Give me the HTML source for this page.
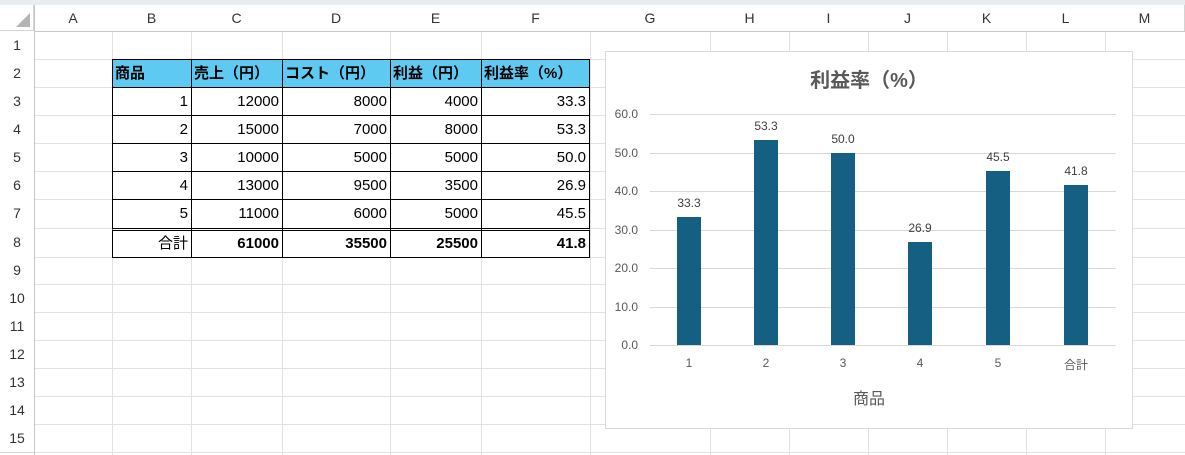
<!DOCTYPE html><html><head><meta charset="utf-8"><style>
*{margin:0;padding:0;box-sizing:border-box}
body{width:1185px;height:455px;overflow:hidden;background:#fff;position:relative;font-family:"Liberation Sans","Noto Sans CJK JP",sans-serif;}
.a{position:absolute}
.ch{position:absolute;top:5px;height:26px;font-size:14px;color:#333;text-align:center;line-height:26px;border-right:1px solid #d4d4d4;background:#fff}
.rh{position:absolute;left:0;width:34px;font-size:14px;color:#333;text-align:center;border-bottom:1px solid #d4d4d4;background:#fff}
.c{position:absolute;font-size:15px;color:#000;padding:0 3px;line-height:27px;border:1px solid #000;margin:-1px 0 0 -1px;white-space:nowrap;overflow:hidden}
.r{text-align:right}
.h{background:#5ecaf2;font-weight:bold}
.b{font-weight:bold}
.gl{position:absolute;left:650px;width:466px;height:1px;background:#d9d9d9}
.yl{position:absolute;left:606px;width:32px;text-align:right;font-size:12px;color:#595959}
.bar{position:absolute;width:24px;background:#156082}
.dl{position:absolute;width:40px;text-align:center;font-size:12px;color:#404040}
.xl{position:absolute;width:40px;text-align:center;font-size:12px;color:#595959;top:356px}
</style></head><body>
<div class="a" style="left:0;top:0;width:1185px;height:5px;background:#e6ecef"></div>
<svg class="a" style="left:0;top:0" width="1185" height="455">
<g stroke="#e1e1e1" stroke-width="1">
<line x1="112.5" y1="31" x2="112.5" y2="455"/><line x1="191.5" y1="31" x2="191.5" y2="455"/><line x1="282.5" y1="31" x2="282.5" y2="455"/><line x1="390.5" y1="31" x2="390.5" y2="455"/><line x1="481.5" y1="31" x2="481.5" y2="455"/><line x1="590.5" y1="31" x2="590.5" y2="455"/><line x1="710.5" y1="31" x2="710.5" y2="455"/><line x1="789.5" y1="31" x2="789.5" y2="455"/><line x1="868.5" y1="31" x2="868.5" y2="455"/><line x1="947.5" y1="31" x2="947.5" y2="455"/><line x1="1026.5" y1="31" x2="1026.5" y2="455"/><line x1="1105.5" y1="31" x2="1105.5" y2="455"/>
<line x1="34" y1="59.5" x2="1185" y2="59.5"/><line x1="34" y1="87.5" x2="1185" y2="87.5"/><line x1="34" y1="115.5" x2="1185" y2="115.5"/><line x1="34" y1="143.5" x2="1185" y2="143.5"/><line x1="34" y1="171.5" x2="1185" y2="171.5"/><line x1="34" y1="199.5" x2="1185" y2="199.5"/><line x1="34" y1="228.5" x2="1185" y2="228.5"/><line x1="34" y1="257.5" x2="1185" y2="257.5"/><line x1="34" y1="284.5" x2="1185" y2="284.5"/><line x1="34" y1="312.5" x2="1185" y2="312.5"/><line x1="34" y1="340.5" x2="1185" y2="340.5"/><line x1="34" y1="368.5" x2="1185" y2="368.5"/><line x1="34" y1="396.5" x2="1185" y2="396.5"/><line x1="34" y1="424.5" x2="1185" y2="424.5"/><line x1="34" y1="452.5" x2="1185" y2="452.5"/>
</g></svg>
<div class="a" style="left:0;top:5px;width:34px;height:26px;border-right:1px solid #d4d4d4;border-bottom:1px solid #d4d4d4"></div>
<svg class="a" style="left:16px;top:13px" width="14" height="14"><polygon points="14,0 14,14 0,14" fill="#b4b4b4"/></svg>
<div class="ch" style="left:34px;width:79px">A</div><div class="ch" style="left:112px;width:80px">B</div><div class="ch" style="left:191px;width:92px">C</div><div class="ch" style="left:282px;width:109px">D</div><div class="ch" style="left:390px;width:92px">E</div><div class="ch" style="left:481px;width:110px">F</div><div class="ch" style="left:590px;width:121px">G</div><div class="ch" style="left:710px;width:80px">H</div><div class="ch" style="left:789px;width:80px">I</div><div class="ch" style="left:868px;width:80px">J</div><div class="ch" style="left:947px;width:80px">K</div><div class="ch" style="left:1026px;width:80px">L</div><div class="ch" style="left:1105px;width:80px">M</div>
<div class="a" style="left:0;top:31px;width:1185px;height:1px;background:#c8c8c8"></div>
<div class="a" style="left:34px;top:5px;width:1px;height:450px;background:#c8c8c8"></div>
<div class="rh" style="top:31px;height:29px;line-height:28px">1</div><div class="rh" style="top:59px;height:29px;line-height:28px">2</div><div class="rh" style="top:87px;height:29px;line-height:28px">3</div><div class="rh" style="top:115px;height:29px;line-height:28px">4</div><div class="rh" style="top:143px;height:29px;line-height:28px">5</div><div class="rh" style="top:171px;height:29px;line-height:28px">6</div><div class="rh" style="top:199px;height:30px;line-height:28px">7</div><div class="rh" style="top:228px;height:30px;line-height:29px">8</div><div class="rh" style="top:257px;height:28px;line-height:27px">9</div><div class="rh" style="top:284px;height:29px;line-height:28px">10</div><div class="rh" style="top:312px;height:29px;line-height:28px">11</div><div class="rh" style="top:340px;height:29px;line-height:28px">12</div><div class="rh" style="top:368px;height:29px;line-height:28px">13</div><div class="rh" style="top:396px;height:29px;line-height:28px">14</div><div class="rh" style="top:424px;height:29px;line-height:28px">15</div>
<div id="t"></div>
<script>
var xs=[113,192,283,391,482,590],ys=[60,88,116,144,172,200,229,258];
var d=[["商品","売上（円）","コスト（円）","利益（円）","利益率（%）"],["1","12000","8000","4000","33.3"],["2","15000","7000","8000","53.3"],["3","10000","5000","5000","50.0"],["4","13000","9500","3500","26.9"],["5","11000","6000","5000","45.5"],["合計","61000","35500","25500","41.8"]];
var h="";for(var r=0;r<7;r++)for(var c=0;c<5;c++){var cls="c"+(r==0?" h":" r")+(r==6&&c>0?" b":"");var st="left:"+xs[c]+"px;top:"+ys[r]+"px;width:"+(xs[c+1]-xs[c]+1)+"px;height:"+(ys[r+1]-ys[r]+1)+"px;"+(r==6?"border-top:3px double #000;line-height:25px;":"")+(r==0?"padding:0 2px;":"");h+='<div class="'+cls+'" style="'+st+'">'+d[r][c]+'</div>';}
document.getElementById("t").outerHTML=h;
</script>
<div class="a" style="left:605px;top:51px;width:528px;height:378px;background:#fff;border:1px solid #d9d9d9"></div>
<div class="a" style="left:605px;top:64px;width:528px;text-align:center;font-size:20px;font-weight:bold;color:#595959">利益率（%）</div>
<div class="gl" style="top:114px"></div><div class="gl" style="top:153px"></div><div class="gl" style="top:191px"></div><div class="gl" style="top:230px"></div><div class="gl" style="top:268px"></div><div class="gl" style="top:307px"></div><div class="gl" style="top:345px"></div>
<div class="yl" style="top:107px">60.0</div><div class="yl" style="top:146px">50.0</div><div class="yl" style="top:184px">40.0</div><div class="yl" style="top:223px">30.0</div><div class="yl" style="top:261px">20.0</div><div class="yl" style="top:300px">10.0</div><div class="yl" style="top:338px">0.0</div>
<div class="bar" style="left:677px;top:217px;height:128px"></div><div class="dl" style="left:669px;top:196px">33.3</div>
<div class="bar" style="left:754px;top:140px;height:205px"></div><div class="dl" style="left:746px;top:119px">53.3</div>
<div class="bar" style="left:831px;top:153px;height:192px"></div><div class="dl" style="left:823px;top:132px">50.0</div>
<div class="bar" style="left:908px;top:242px;height:103px"></div><div class="dl" style="left:900px;top:221px">26.9</div>
<div class="bar" style="left:986px;top:171px;height:174px"></div><div class="dl" style="left:978px;top:150px">45.5</div>
<div class="bar" style="left:1064px;top:185px;height:160px"></div><div class="dl" style="left:1056px;top:164px">41.8</div>
<div class="xl" style="left:669px">1</div><div class="xl" style="left:746px">2</div><div class="xl" style="left:823px">3</div><div class="xl" style="left:900px">4</div><div class="xl" style="left:978px">5</div><div class="xl" style="left:1056px">合計</div>
<div class="a" style="left:605px;top:385px;width:528px;text-align:center;font-size:16px;color:#595959">商品</div>
</body></html>
